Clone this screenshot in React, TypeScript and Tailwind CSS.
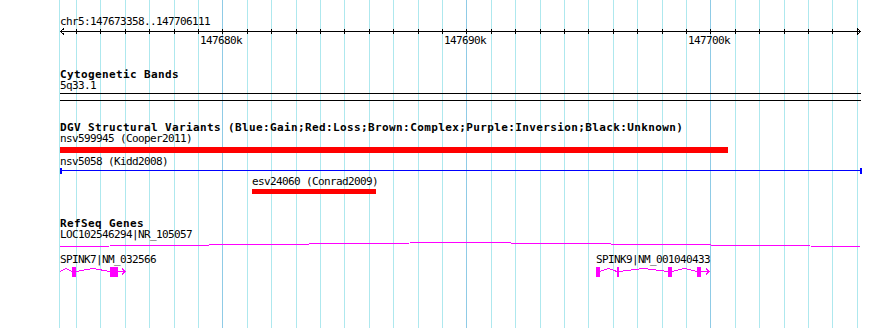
import React from "react";

const gx = (k: number) => Math.round(222.3 + k * 24.4);
const ticks = Array.from({ length: 33 }, (_, i) => i - 6);
const MAG = "#ff00ff";

const txt = "h-[11px] text-[11px] leading-[11px] tracking-[-0.62px] whitespace-pre";
const bold = "h-[11px] text-[11px] leading-[11px] font-bold tracking-[0.38px] whitespace-pre";

function Hat({ a, b, top = 3.5, base = 6.5 }: { a: number; b: number; top?: number; base?: number }) {
  const m = (a + b) / 2;
  return <polyline points={`${a},${base} ${m},${top} ${b},${base}`} fill="none" stroke={MAG} strokeWidth={1} />;
}

export default function App() {
  return (
    <div className="relative w-[890px] h-[328px] overflow-hidden bg-white text-black font-['DejaVu_Sans_Mono',monospace]">
      <svg className="absolute left-0 top-0" width={890} height={328} shapeRendering="crispEdges">
        <line x1={59.5} y1={0} x2={59.5} y2={328} stroke="#aee8ee" />
        {ticks.map((k) => {
          const x = gx(k) + 0.5;
          return (
            <line key={k} x1={x} x2={x} y1={0} y2={328} stroke={k % 10 === 0 ? "#8fcbe6" : "#aee8ee"} />
          );
        })}
      </svg>

      <div className="relative flex flex-col">
        <div className={`mt-[16px] pl-[60px] ${txt}`}>chr5:147673358..147706111</div>

        <svg width={890} height={21} shapeRendering="crispEdges" className="block">
          <line x1={60} y1={4.5} x2={861} y2={4.5} stroke="#000" />
          {ticks.map((k) => {
            const x = gx(k) + 0.5;
            return <line key={k} x1={x} x2={x} y1={2} y2={7} stroke="#000" />;
          })}
          <polyline points="64,1.5 60.5,4.5 64,7.5" fill="none" stroke="#000" />
          <polyline points="857,1.5 860.5,4.5 857,7.5" fill="none" stroke="#000" />
          {[0, 10, 20].map((k) => (
            <text
              key={k}
              x={gx(k) - 22}
              y={17}
              fontSize={11}
              className="tracking-[-0.62px] font-['DejaVu_Sans_Mono',monospace]"
              fill="#000"
            >
              {`${147680 + k}k`}
            </text>
          ))}
        </svg>

        <div className={`mt-[21px] pl-[60px] ${bold}`}>Cytogenetic Bands</div>
        <div className={`pl-[60px] ${txt}`}>5q33.1</div>
        <svg width={890} height={10} shapeRendering="crispEdges" className="block">
          <line x1={60} y1={2.5} x2={861} y2={2.5} stroke="#000" />
          <line x1={60} y1={9.5} x2={861} y2={9.5} stroke="#000" />
        </svg>

        <div className={`mt-[21px] pl-[60px] ${bold}`}>
          DGV Structural Variants (Blue:Gain;Red:Loss;Brown:Complex;Purple:Inversion;Black:Unknown)
        </div>
        <div className={`pl-[60px] ${txt}`}>nsv599945 (Cooper2011)</div>
        <svg width={890} height={10} shapeRendering="crispEdges" className="block">
          <rect x={60} y={3} width={668} height={6} fill="#ff0000" />
        </svg>
        <div className={`mt-[2px] pl-[60px] ${txt}`}>nsv5058 (Kidd2008)</div>
        <svg width={890} height={7} shapeRendering="crispEdges" className="block">
          <line x1={60} y1={3.5} x2={861} y2={3.5} stroke="#0000ff" />
          <rect x={60} y={1} width={2} height={6} fill="#0000ff" />
          <rect x={860} y={1} width={2} height={6} fill="#0000ff" />
        </svg>
        <div className={`mt-[2px] pl-[252px] ${txt}`}>esv24060 (Conrad2009)</div>
        <svg width={890} height={8} shapeRendering="crispEdges" className="block">
          <rect x={252} y={2} width={124} height={5} fill="#ff0000" />
        </svg>

        <div className={`mt-[23px] pl-[60px] ${bold}`}>RefSeq Genes</div>
        <div className={`pl-[60px] ${txt}`}>LOC102546294|NR_105057</div>
        <svg width={890} height={10} shapeRendering="crispEdges" className="block">
          <polyline points="60,6.5 460,2.5 860,6.5" fill="none" stroke={MAG} />
        </svg>
        <div className="mt-[4px] flex pl-[60px]">
          <span className={`w-[536px] shrink-0 ${txt}`}>SPINK7|NM_032566</span>
          <span className={txt}>SPINK9|NM_001040433</span>
        </div>
        <svg width={890} height={15} shapeRendering="crispEdges" className="block">
          <Hat a={60} b={72} />
          <rect x={72} y={2} width={4} height={10} fill={MAG} />
          <Hat a={76} b={110} />
          <rect x={110} y={2} width={8} height={10} fill={MAG} />
          <line x1={118} y1={6.5} x2={125} y2={6.5} stroke={MAG} />
          <polyline points="122,3.5 125,6.5 122,9.5" fill="none" stroke={MAG} />

          <rect x={596} y={2} width={4} height={10} fill={MAG} />
          <Hat a={600} b={617} />
          <rect x={617} y={2} width={2} height={10} fill={MAG} />
          <Hat a={619} b={668} />
          <rect x={668} y={2} width={4} height={10} fill={MAG} />
          <Hat a={672} b={697} />
          <rect x={697} y={2} width={4} height={10} fill={MAG} />
          <line x1={701} y1={6.5} x2={709} y2={6.5} stroke={MAG} />
          <polyline points="706,3.5 709,6.5 706,9.5" fill="none" stroke={MAG} />
        </svg>
      </div>
    </div>
  );
}
